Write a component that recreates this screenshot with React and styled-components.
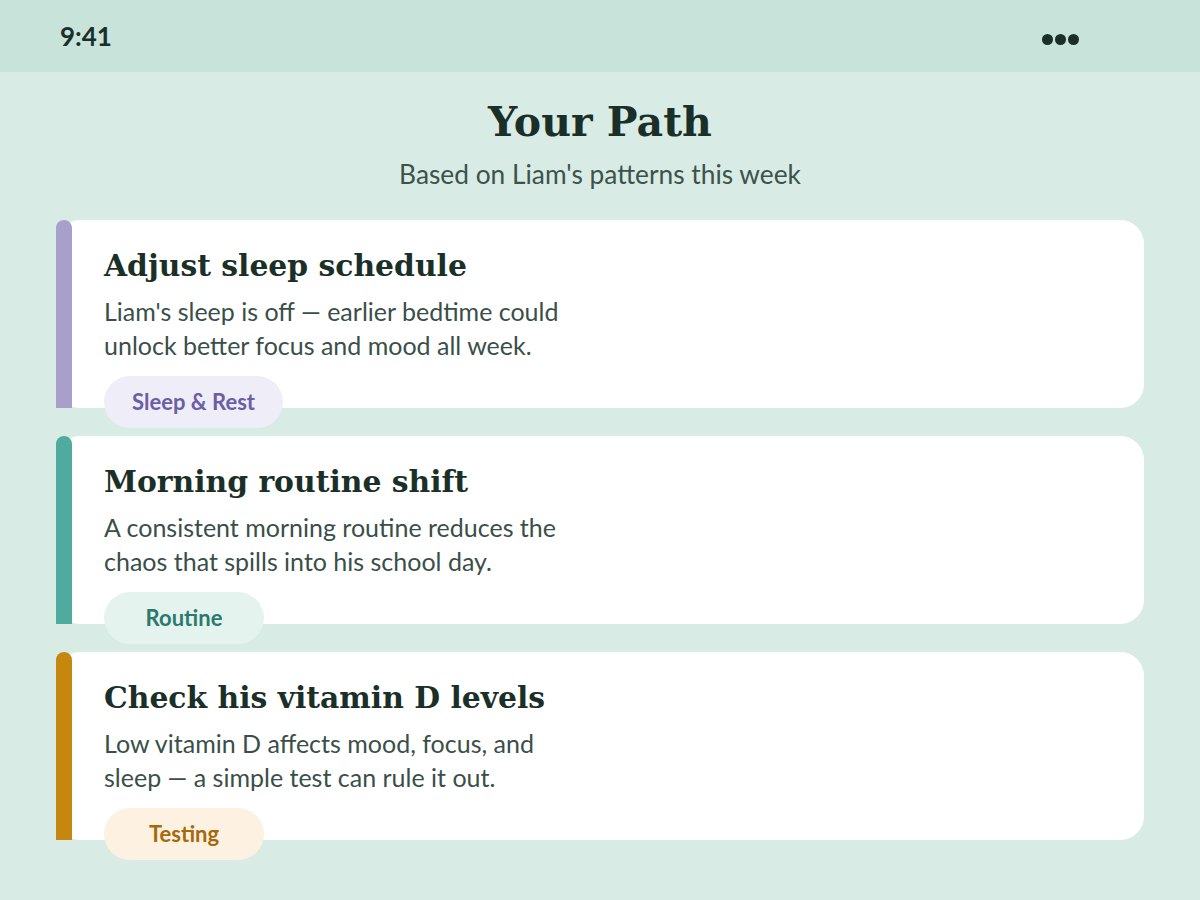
import React from 'react';
import styled, { createGlobalStyle } from "styled-components"

const GlobalStyle = createGlobalStyle`
  html, body {
    margin: 0;
    padding: 0;
    background: #d8ece5;
  }
  body {
    font-family: Lato, "Noto Sans", sans-serif;
    color: #1b2f29;
  }
`

// each card has its own accent colour set
const tones = {
    purple: { bar: "#a89fcb", pill: "#efedf8", text: "#6a5fa7" },
    teal: { bar: "#4eab9d", pill: "#e5f3ef", text: "#2b7a6b" },
    amber: { bar: "#c6870f", pill: "#fdf2e1", text: "#a56a0b" },
}

const steps = [
    {
        title: "Adjust sleep schedule",
        text: "Liam's sleep is off — earlier bedtime could unlock better focus and mood all week.",
        tag: "Sleep & Rest",
        tone: "purple",
    },
    {
        title: "Morning routine shift",
        text: "A consistent morning routine reduces the chaos that spills into his school day.",
        tag: "Routine",
        tone: "teal",
    },
    {
        title: "Check his vitamin D levels",
        text: "Low vitamin D affects mood, focus, and sleep — a simple test can rule it out.",
        tag: "Testing",
        tone: "amber",
    },
]

const App = () => {
    return (
        <Screen>
            <GlobalStyle/>
            <StatusBar>
                <Time>9:41</Time>
                <Dots>
                    <Dot/><Dot/><Dot/>
                </Dots>
            </StatusBar>
            <Header>
                <Title>Your Path</Title>
                <Subtitle>Based on Liam's patterns this week</Subtitle>
            </Header>
            <CardList>
                {steps.map(step => (
                    <Card key={step.title}>
                        <AccentBar color={tones[step.tone].bar}/>
                        <CardTitle>{step.title}</CardTitle>
                        <CardText>{step.text}</CardText>
                        <Tag bg={tones[step.tone].pill} fg={tones[step.tone].text}>
                            {step.tag}
                        </Tag>
                    </Card>
                ))}
            </CardList>
        </Screen>
    )
}
export default App;

const Screen = styled.div`
    width: 1200px;
    min-height: 900px;
    background: #d8ece5;
`

const StatusBar = styled.div`
    height: 72px;
    background: #c7e3da;
    display: flex;
    align-items: center;
    justify-content: space-between;
    padding: 0 121px 0 60px;
    box-sizing: border-box;
`

const Time = styled.div`
    font-size: 26px;
    font-weight: 700;
    color: #1b2f29;
`

const Dots = styled.div`
    display: flex;
    gap: 2px;
    padding-top: 6px;
`

const Dot = styled.span`
    width: 11px;
    height: 11px;
    border-radius: 50%;
    background: #1b2f29;
`

const Header = styled.div`
    text-align: center;
    padding-top: 26px;
`

const Title = styled.h1`
    margin: 0;
    font-family: "DejaVu Serif", serif;
    font-weight: 700;
    font-size: 41px;
    line-height: 48px;
    color: #1b2f29;
`

const Subtitle = styled.p`
    margin: 11px 0 0;
    font-size: 26.3px;
    line-height: 34px;
    color: #3c524b;
`

const CardList = styled.div`
    display: flex;
    flex-direction: column;
    gap: 28px;
    margin: 29px 56px 0;
`

const Card = styled.div`
    position: relative;
    height: 188px;
    box-sizing: border-box;
    background: #ffffff;
    border-radius: 24px;
    padding: 28px 40px 0 48px;
`

// the coloured strip sits over the card's left edge
const AccentBar = styled.div`
    position: absolute;
    left: 0;
    top: 0;
    bottom: 0;
    width: 16px;
    border-radius: 8px 8px 0 0;
    background: ${props => props.color};
`

const CardTitle = styled.h2`
    margin: 0;
    font-family: "DejaVu Serif", serif;
    font-weight: 700;
    font-size: 29.8px;
    line-height: 36px;
    color: #1b2f29;
`

const CardText = styled.p`
    margin: 10px 0 0;
    max-width: 480px;
    font-size: 25px;
    line-height: 34px;
    color: #3a4f49;
`

const Tag = styled.div`
    display: inline-flex;
    align-items: center;
    justify-content: center;
    box-sizing: border-box;
    height: 52px;
    min-width: 160px;
    padding: 0 28px 2px;
    margin-top: 14px;
    border-radius: 26px;
    font-size: 22px;
    font-weight: 700;
    background: ${props => props.bg};
    color: ${props => props.fg};
`
